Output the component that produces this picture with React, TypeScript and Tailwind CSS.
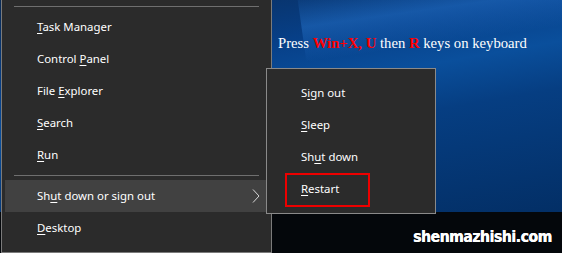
import React from 'react';

type Item = { pre: string; key: string; post: string };

const mainTop: Item[] = [
  { pre: '', key: 'T', post: 'ask Manager' },
  { pre: 'Control ', key: 'P', post: 'anel' },
  { pre: 'File ', key: 'E', post: 'xplorer' },
  { pre: '', key: 'S', post: 'earch' },
  { pre: '', key: 'R', post: 'un' },
];

const subItems: Item[] = [
  { pre: 'S', key: 'i', post: 'gn out' },
  { pre: '', key: 'S', post: 'leep' },
  { pre: 'Sh', key: 'u', post: 't down' },
  { pre: '', key: 'R', post: 'estart' },
];

function Label({ it }: { it: Item }) {
  return (
    <span className="whitespace-pre">
      {it.pre}
      <u className="underline-offset-2 decoration-1">{it.key}</u>
      {it.post}
    </span>
  );
}

function Row({ it, indent }: { it: Item; indent: string }) {
  return (
    <div className={`h-[32px] flex items-center ${indent}`}>
      <Label it={it} />
    </div>
  );
}

export default function App() {
  return (
    <div
      className="relative w-[562px] h-[253px] overflow-hidden bg-[#04070b] text-white"
      style={{ fontFamily: '"Noto Sans", "Open Sans", sans-serif' }}
    >
      {/* desktop wallpaper */}
      <div className="absolute left-0 top-0 w-full h-[212px] bg-[linear-gradient(170deg,#0a2a55_0%,#074089_30%,#0a4f9c_45%,#063e82_60%,#032f66_100%)]" />
      <div className="absolute left-[300px] top-[-30px] w-[320px] h-[70px] rotate-[-8deg] bg-[linear-gradient(180deg,rgba(40,120,210,0)_0%,rgba(40,120,210,0.45)_50%,rgba(40,120,210,0)_100%)]" />

      {/* instruction text */}
      <div
        className="absolute left-[278px] top-[33px] text-[14.7px] leading-[20px] whitespace-nowrap"
        style={{ fontFamily: '"Liberation Serif", serif' }}
      >
        Press <b className="text-[#ff0000]">Win+X, U</b> then <b className="text-[#ff0000]">R</b> keys on keyboard
      </div>

      {/* watermark */}
      <div
        className="absolute left-[413px] top-[227px] text-[15.5px] leading-[20px] font-bold tracking-[-0.4px] text-white [text-shadow:0.4px_0_0_#fff]"
        style={{ fontFamily: '"DejaVu Sans Condensed", "DejaVu Sans", sans-serif' }}
      >
        shenmazhishi.com
      </div>

      {/* Win+X menu */}
      <div className="absolute left-[1px] top-[-10px] w-[271px] bg-[#2b2b2b] border border-[#7b7b7b] text-[11.4px] px-[3px] pt-[15px] pb-[8px]">
        <div className="mx-[9px] h-px bg-[#6f6f6f]" />
        <div className="mt-[4px]">
          {mainTop.map((it, i) => (
            <Row key={i} it={it} indent="pl-[32px]" />
          ))}
        </div>
        <div className="my-[4px] mx-[9px] h-px bg-[#6f6f6f]" />
        <div className="h-[32px] flex items-center pl-[32px] pr-[8px] bg-[#414141]">
          <Label it={{ pre: 'Sh', key: 'u', post: 't down or sign out' }} />
          <svg className="ml-auto" width="8" height="14" viewBox="0 0 8 14">
            <polyline points="1,0.5 7,7 1,13.5" fill="none" stroke="#d8d8d8" strokeWidth="1" />
          </svg>
        </div>
        <Row it={{ pre: '', key: 'D', post: 'esktop' }} indent="pl-[32px]" />
      </div>

      {/* Shut down submenu */}
      <div className="absolute left-[266px] top-[68px] w-[170px] h-[146px] bg-[#2b2b2b] border border-[#8a8a8a] text-[11.4px] pt-[8px]">
        {subItems.map((it, i) => (
          <Row key={i} it={it} indent="pl-[34px]" />
        ))}
        <div className="absolute left-[18px] top-[104px] w-[85px] h-[34px] border-2 border-[#ee0000]" />
      </div>
    </div>
  );
}
